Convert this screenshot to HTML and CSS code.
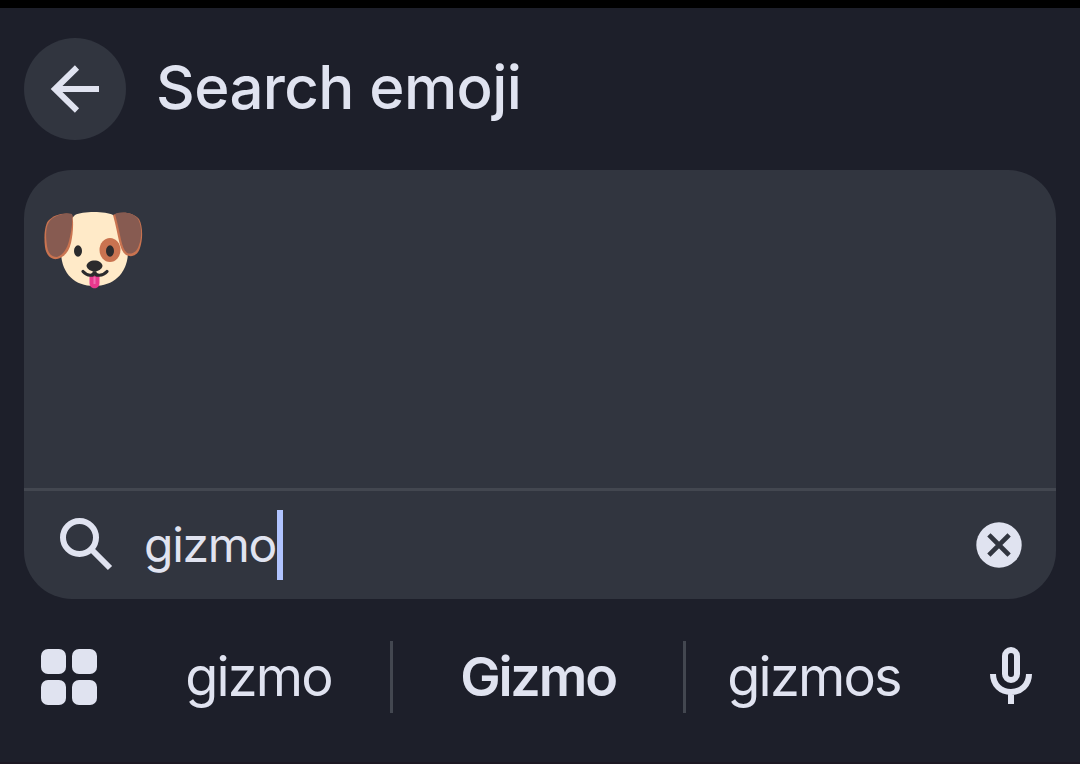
FILE: index.html
```
<!DOCTYPE html>
<html lang="en">
  <head>
    <meta charset="utf-8">
    <title>Search emoji</title>
    <link rel="stylesheet" href="styles.css">
  </head>
  <body>
    <div class="keyboard">
      <div class="header">
        <button class="back" aria-label="Back">
          <svg width="102" height="102" viewBox="0 0 102 102">
            <path d="M53 29.500L31 51l22 21.500M31 51h44" fill="none" stroke="#e0e3f0" stroke-width="6"/>
          </svg>
        </button>
        <h1>Search emoji</h1>
      </div>

      <div class="panel">
        <div class="results">
          <svg class="emoji" width="100" height="80" viewBox="0 0 100 80" role="img" aria-label="Dog face">
            <path d="M31 6C38 2 62 2 69 6C77 12 83 28 84 42C84 64 70 77 50 77C30 77 17 64 17 42C18 28 24 12 31 6Z" fill="#ffeac8"/>
            <path d="M28 5C19 3 9 6 4 12C0 18 0 30 1 38C2 46 7 51 13 50C21 48 25 42 27 34C29 25 30 13 28 5Z" fill="#c97350"/>
            <path d="M28 5C19 3 9 7 5 13C1 19 2 30 3 37C4 44 7 48 13 48C19 46 23 40 25 32C27 24 29 14 28 5Z" fill="#875b51"/>
            <path d="M69 6C77 2 89 3 95 10C99 17 99 30 96 39C94 46 88 49 82 46C75 41 75 28 69 6Z" fill="#c97350"/>
            <path d="M71 5C79 2 90 4 94 10C98 17 98 29 95 36C93 43 88 46 83 44C77 39 77 26 71 5Z" fill="#875b51"/>
            <ellipse cx="66" cy="41" rx="10.500" ry="12" fill="#c97350"/>
            <ellipse cx="34" cy="42" rx="4" ry="5.700" fill="#2b2b2d"/>
            <ellipse cx="66" cy="42" rx="4" ry="5.700" fill="#2b2b2d"/>
            <path d="M45.500 67h10v7c0 7-10 7-10 0z" fill="#e9388d"/>
            <path d="M50.500 68v7" stroke="#f06eb0" stroke-width="2"/>
            <path d="M39 62.500C43 67 50 68 50.500 62.500C51 68 59 67 63 62.500" fill="none" stroke="#2b2b2d" stroke-width="3.200" stroke-linecap="round"/>
            <path d="M42.500 57C43 49.500 58 49.500 58.500 57C58 60 54 62.500 50.500 62.500C47 62.500 43 60 42.500 57Z" fill="#2b2b2d"/>
          </svg>
        </div>
        <div class="search">
          <svg class="search-icon" width="54" height="54" viewBox="0 0 54 54" fill="none" stroke="#e0e3f0" stroke-width="6">
            <circle cx="20.500" cy="20.500" r="16.500"/>
            <path d="M32 32l19 19"/>
          </svg>
          <span class="query">gizmo</span>
          <span class="caret"></span>
          <button class="clear" aria-label="Clear">
            <svg width="46" height="46" viewBox="0 0 46 46">
              <circle cx="23" cy="23" r="22.700" fill="#e0e3f0"/>
              <path d="M14.500 14.500l17 17M31.500 14.500l-17 17" stroke="#31353f" stroke-width="4.600" stroke-linecap="square"/>
            </svg>
          </button>
        </div>
      </div>

      <div class="suggestions">
        <div class="apps">
          <span></span><span></span><span></span><span></span>
        </div>
        <div class="word first">gizmo</div>
        <div class="word best">Gizmo</div>
        <div class="word last">gizmos</div>
        <svg class="mic" width="42" height="58" viewBox="0 0 42 58" fill="none" stroke="#e0e3f0" stroke-width="6">
          <rect x="15" y="3" width="12" height="30" rx="6"/>
          <path d="M3 27c0 11 8 18 18 18s18-7 18-18M21 45v12"/>
        </svg>
      </div>
    </div>
  </body>
</html>
```
FILE: styles.css
```
* { box-sizing: border-box; }

body {
  margin: 0;
  background: #1d1f2a;
  color: #e0e3f0;
  font-family: Inter, Roboto, sans-serif;
}

button { padding: 0; border: 0; background: none; }
svg { display: block; }

.keyboard {
  height: 764px;
  border-top: 8px solid #000;
  border-bottom: 2px solid #1c1823;
  padding: 30px 24px 0;
}

.header { display: flex; align-items: center; height: 102px; }
.back { width: 102px; height: 102px; border-radius: 50%; background: #31353f; }
h1 {
  margin: 0 0 4px 30px;
  font-size: 60px;
  line-height: 98px;
  font-weight: 500;
  letter-spacing: -0.6px;
}

.panel {
  margin-top: 30px;
  height: 429px;
  border-radius: 48px;
  background: #31353f;
}
.results { height: 321px; padding: 39px 0 0 20px; border-bottom: 3px solid #434750; }
.search { display: flex; align-items: center; height: 108px; padding: 0 34px 0 35px; }
.search-icon { margin-top: -2px; }
.query { width: 133px; margin-left: 31px; font-size: 48px; line-height: 60px; letter-spacing: -1.3px; white-space: nowrap; }
.caret { width: 6px; height: 70px; background: #b0c4ff; }
.clear { margin-left: auto; }

.suggestions { display: flex; align-items: center; height: 72px; margin-top: 42px; }
.apps {
  display: grid;
  grid-template-columns: 25px 25px;
  gap: 6px;
  width: 56px;
  margin-left: 17px;
}
.apps span { height: 25px; border-radius: 7px; background: #e0e3f0; }
.word { height: 72px; font-size: 54px; line-height: 72px; letter-spacing: -1.8px; text-align: center; white-space: nowrap; }
.first { width: 263px; margin-left: 30px; }
.best { width: 296px; font-weight: 600; letter-spacing: -2.2px; border: solid #434750; border-width: 0 3px; }
.last { width: 256px; }
.mic { margin: -2px 0 0 48px; }
```
